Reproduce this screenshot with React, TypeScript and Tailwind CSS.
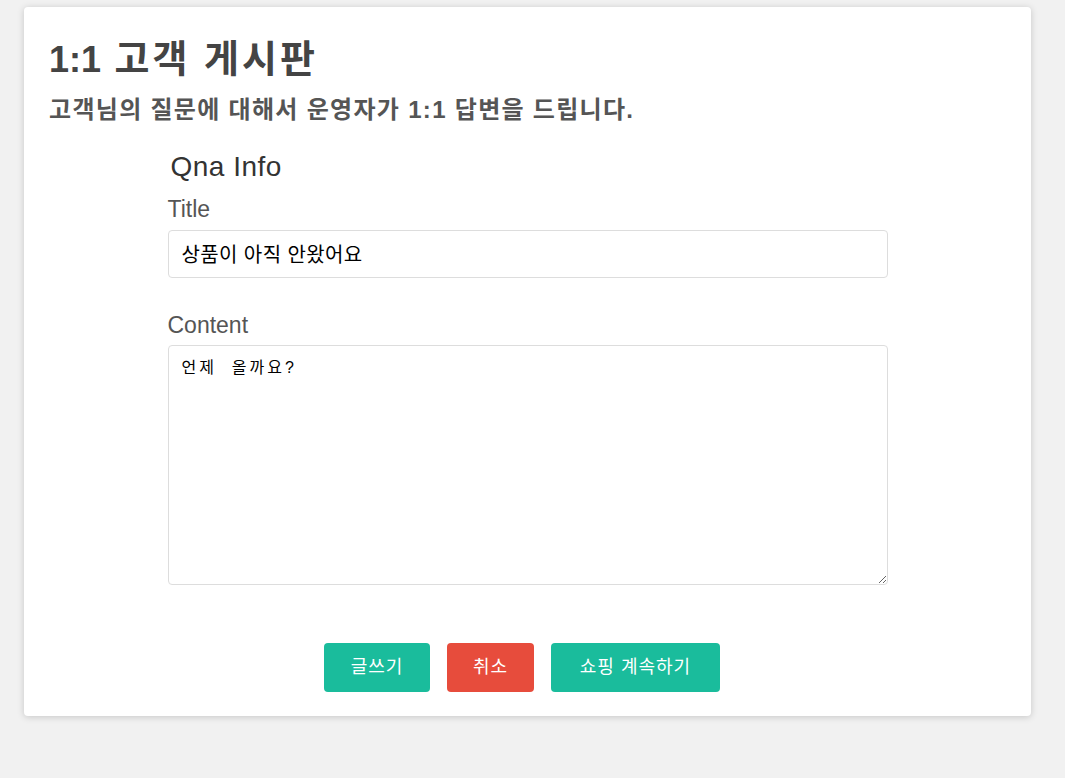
import { useState } from 'react';

export default function App() {
  const [title, setTitle] = useState('상품이 아직 안왔어요');
  const [content, setContent] = useState('언제  올까요?');

  return (
    <div className="min-h-screen bg-[#f1f1f1] pt-[7px] pl-[24px] pr-[34px] font-['Liberation_Sans','Noto_Sans_CJK_KR',sans-serif]">
      <div className="bg-white rounded shadow-[0_1px_7px_rgba(0,0,0,0.18)] px-[25px] pt-[32px] pb-[24px]">
        {/* Header */}
        <h1 className="text-[36px] leading-[1.1] font-bold text-[#444]">
          1:1<span className="text-[38px] tracking-[3px]"> 고객 게시판</span>
        </h1>
        <h3 className="mt-[16px] text-[24px] leading-[1.1] font-bold tracking-[1.3px] text-[#555]">
          고객님의 질문에 대해서 운영자가 1:1 답변을 드립니다.
        </h3>

        {/* Form */}
        <div className="mx-auto w-[720px] mt-[29px]">
          <h4 className="pl-[3px] text-[28px] leading-[1.1] tracking-[0.5px] text-[#333]">Qna Info</h4>

          <label className="block mt-[13px] text-[23px] leading-[1.2] text-[#555]">Title</label>
          <input
            type="text"
            value={title}
            onChange={(e) => setTitle(e.target.value)}
            className="mt-[6px] block w-full h-[48px] px-[13px] border border-[#ddd] rounded text-[20px] tracking-[0.4px] text-black focus:outline-none"
          />

          <label className="block mt-[34px] text-[23px] leading-[1.2] text-[#555]">Content</label>
          <textarea
            value={content}
            onChange={(e) => setContent(e.target.value)}
            className="mt-[6px] block w-full h-[240px] px-[13px] py-[10px] border border-[#ddd] rounded text-[16px] leading-[1.5] tracking-[3px] text-black focus:outline-none"
          />
        </div>

        {/* Buttons */}
        <div className="mt-[58px] flex justify-center gap-[17px] pr-[11px]">
          <button className="w-[106px] h-[49px] rounded bg-[#1abc9c] text-white text-[18px] tracking-[1px]">글쓰기</button>
          <button className="w-[87px] h-[49px] rounded bg-[#e74c3c] text-white text-[18px] tracking-[1px]">취소</button>
          <button className="w-[169px] h-[49px] rounded bg-[#1abc9c] text-white text-[18px] tracking-[1px]">쇼핑 계속하기</button>
        </div>
      </div>
    </div>
  );
}
